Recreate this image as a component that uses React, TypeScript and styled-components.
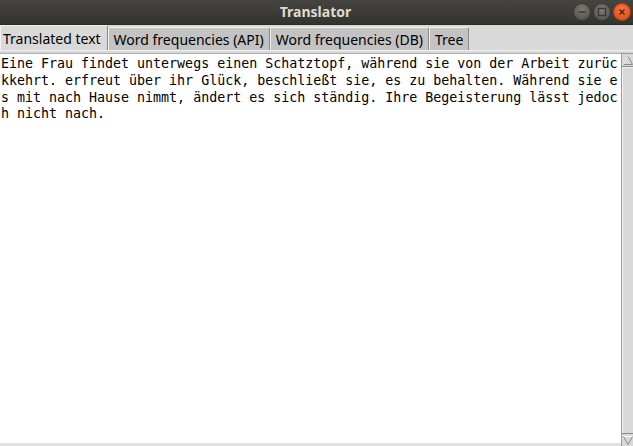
import React from "react";
import styled, { createGlobalStyle } from "styled-components";

const Global = createGlobalStyle`
  html, body { margin: 0; padding: 0; }
  body {
    width: 633px;
    height: 446px;
    overflow: hidden;
    background: #d9d9d9;
  }
`;

const Window = styled.div`
  width: 633px;
  height: 446px;
  display: flex;
  flex-direction: column;
  background: #d9d9d9;
  overflow: hidden;
`;

const TitleBar = styled.div`
  position: relative;
  height: 25px;
  flex: none;
  display: flex;
  align-items: center;
  justify-content: center;
  background: linear-gradient(#45443f, #3b3a36 60%, #34332f);
  border-bottom: 1px solid #2b2a27;
  box-sizing: border-box;
`;

const Title = styled.div`
  font-family: "Noto Sans", "DejaVu Sans", sans-serif;
  font-weight: 700;
  font-size: 14px;
  color: #dfdbd2;
  margin-left: -2px;
  margin-top: -1px;
`;

const Controls = styled.div`
  position: absolute;
  right: 2px;
  top: 3px;
  display: flex;
  gap: 2px;
`;

const CircleButton = styled.div<{ $close?: boolean }>`
  width: 18px;
  height: 18px;
  border-radius: 50%;
  box-sizing: border-box;
  display: flex;
  align-items: center;
  justify-content: center;
  background: ${(p) =>
    p.$close
      ? "radial-gradient(circle at 50% 35%, #f77a45, #e2531c 70%)"
      : "radial-gradient(circle at 50% 35%, #7b7a75, #5a5954 70%)"};
  border: 1px solid ${(p) => (p.$close ? "#b3420f" : "#3a3935")};
`;

const TabStrip = styled.div`
  height: 25px;
  flex: none;
  display: flex;
  align-items: flex-end;
  background: #d9d9d9;
`;

const Tab = styled.div<{ $active?: boolean }>`
  height: ${(p) => (p.$active ? "25px" : "23px")};
  box-sizing: border-box;
  padding-left: ${(p) => (p.$active ? "2px" : "5px")};
  padding-right: ${(p) => (p.$active ? "6px" : "5px")};
  padding-top: ${(p) => (p.$active ? "0" : "1px")};
  display: flex;
  align-items: center;
  font-family: "Noto Sans", "DejaVu Sans", sans-serif;
  font-size: 14px;
  color: #000;
  background: ${(p) => (p.$active ? "#d9d9d9" : "#c3c3c3")};
  border-top: 1px solid #f0f0f0;
  border-left: 1px solid #f0f0f0;
  border-right: 1px solid #8a8a8a;
  border-top-left-radius: 2px;
  border-top-right-radius: 2px;
  white-space: nowrap;
`;

const PaneGap = styled.div`
  height: 3px;
  flex: none;
  background: #d9d9d9;
  border-top: 1px solid #f0f0f0;
  box-sizing: border-box;
`;

const Body = styled.div`
  flex: 1;
  display: flex;
  min-height: 0;
`;

const TextArea = styled.div`
  flex: 1;
  background: #ffffff;
  border-top: 1px solid #b0b0b0;
  border-bottom: 3px solid #e2e2e2;
  padding: 2px 0 0 1px;
  font-family: "DejaVu Sans Mono", "Liberation Mono", monospace;
  font-size: 13.3px;
  line-height: 16.8px;
  color: #000;
  overflow: hidden;
`;

const Line = styled.div`
  white-space: pre;
`;

const Scrollbar = styled.div`
  width: 11px;
  flex: none;
  display: flex;
  flex-direction: column;
  background: #d9d9d9;
  border-left: 1px solid #9a9a9a;
  border-top: 1px solid #9a9a9a;
`;

const ArrowButton = styled.div`
  height: 12px;
  flex: none;
  display: flex;
  align-items: center;
  justify-content: flex-start;
  padding-left: 1px;
  background: #d9d9d9;
`;

const Slider = styled.div`
  flex: 1;
  background: #d9d9d9;
  border-top: 1px solid #8a8a8a;
  border-bottom: 1px solid #8a8a8a;
  box-shadow: inset 1px 1px 0 #f2f2f2;
`;

const lines = [
  "Eine Frau findet unterwegs einen Schatztopf, während sie von der Arbeit zurüc",
  "kkehrt. erfreut über ihr Glück, beschließt sie, es zu behalten. Während sie e",
  "s mit nach Hause nimmt, ändert es sich ständig. Ihre Begeisterung lässt jedoc",
  "h nicht nach.",
];

const tabs = [
  "Translated text",
  "Word frequencies (API)",
  "Word frequencies (DB)",
  "Tree",
];

export default function App() {
  return (
    <>
      <Global />
      <Window>
        <TitleBar>
          <Title>Translator</Title>
          <Controls>
            <CircleButton>
              <svg width="10" height="10" viewBox="0 0 10 10">
                <line x1="1.5" y1="5" x2="8.5" y2="5" stroke="#3a3935" strokeWidth="1.5" />
              </svg>
            </CircleButton>
            <CircleButton>
              <svg width="10" height="10" viewBox="0 0 10 10">
                <rect x="1.5" y="1.5" width="7" height="7" fill="none" stroke="#3a3935" strokeWidth="1.3" />
              </svg>
            </CircleButton>
            <CircleButton $close>
              <svg width="10" height="10" viewBox="0 0 10 10">
                <path d="M2.5 2.5 L7.5 7.5 M7.5 2.5 L2.5 7.5" stroke="#5a1f07" strokeWidth="1.5" />
              </svg>
            </CircleButton>
          </Controls>
        </TitleBar>
        <TabStrip>
          {tabs.map((t, i) => (
            <Tab key={t} $active={i === 0}>
              {t}
            </Tab>
          ))}
        </TabStrip>
        <PaneGap />
        <Body>
          <TextArea>
            {lines.map((l, i) => (
              <Line key={i}>{l}</Line>
            ))}
          </TextArea>
          <Scrollbar>
            <ArrowButton>
              <svg width="10" height="9" viewBox="0 0 10 9">
                <path d="M0.5 8.5 L5 0.5 L9.5 8.5 Z" fill="#d9d9d9" stroke="#8a8a8a" strokeWidth="1" />
                <path d="M0.5 8.5 L5 0.5" stroke="#ffffff" strokeWidth="1" />
              </svg>
            </ArrowButton>
            <Slider />
            <ArrowButton>
              <svg width="10" height="9" viewBox="0 0 10 9">
                <path d="M0.5 0.5 L5 8.5 L9.5 0.5 Z" fill="#d9d9d9" stroke="#8a8a8a" strokeWidth="1" />
                <path d="M0.5 0.5 L9.5 0.5" stroke="#ffffff" strokeWidth="1" />
              </svg>
            </ArrowButton>
          </Scrollbar>
        </Body>
      </Window>
    </>
  );
}
